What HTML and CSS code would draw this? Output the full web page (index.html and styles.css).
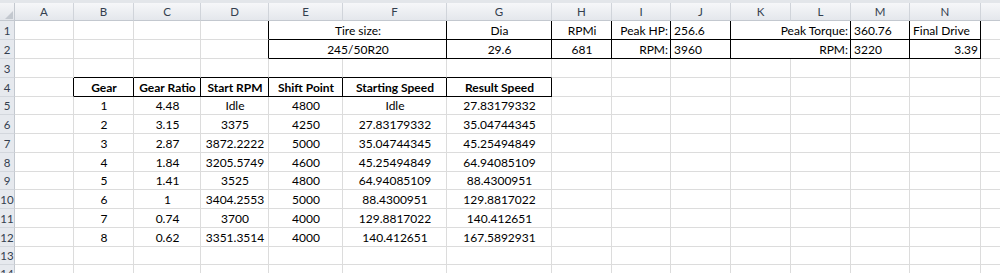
FILE: index.html
```html
<!DOCTYPE html>
<html>
<head>
<meta charset="utf-8">
<link rel="stylesheet" href="styles.css">
</head>
<body>
<div class="topstrip"></div>
<div class="sheet">
  <!-- column headers -->
  <div class="corner"><svg width="8" height="8" viewBox="0 0 8 8"><polygon points="8,0 8,8 0,8" fill="#c3c8cf"/></svg></div>
  <div class="ch">A</div><div class="ch">B</div><div class="ch">C</div><div class="ch">D</div><div class="ch">E</div><div class="ch">F</div><div class="ch">G</div><div class="ch">H</div><div class="ch">I</div><div class="ch">J</div><div class="ch">K</div><div class="ch">L</div><div class="ch">M</div><div class="ch">N</div><div class="ch"></div>

  <!-- row 1 -->
  <div class="rh">1</div>
  <div class="c"></div><div class="c"></div><div class="c"></div><div class="c kr"></div>
  <div class="c s2 kr kb">Tire size:</div>
  <div class="c kr kb">Dia</div>
  <div class="c kr kb">RPMi</div>
  <div class="c r kr kb">Peak HP:</div>
  <div class="c l kr kb">256.6</div>
  <div class="c s2 r kr kb">Peak Torque:</div>
  <div class="c l kr kb">360.76</div>
  <div class="c l kr kb">Final Drive</div>
  <div class="c"></div>

  <!-- row 2 -->
  <div class="rh">2</div>
  <div class="c"></div><div class="c"></div><div class="c"></div><div class="c kr"></div>
  <div class="c s2 kr kb">245/50R20</div>
  <div class="c kr kb">29.6</div>
  <div class="c kr kb">681</div>
  <div class="c r kr kb">RPM:</div>
  <div class="c l kr kb">3960</div>
  <div class="c s2 r kr kb">RPM:</div>
  <div class="c l kr kb">3220</div>
  <div class="c r kr kb">3.39</div>
  <div class="c"></div>

  <!-- row 3 -->
  <div class="rh">3</div>
  <div class="c"></div><div class="c kb"></div><div class="c kb"></div><div class="c kb"></div><div class="c kb"></div><div class="c kb"></div><div class="c kb"></div>
  <div class="c"></div><div class="c"></div><div class="c"></div><div class="c"></div><div class="c"></div><div class="c"></div><div class="c"></div><div class="c"></div>

  <!-- row 4 -->
  <div class="rh">4</div>
  <div class="c kr"></div>
  <div class="c b kr kb">Gear</div>
  <div class="c b kr kb">Gear Ratio</div>
  <div class="c b kr kb">Start RPM</div>
  <div class="c b kr kb">Shift Point</div>
  <div class="c b kr kb">Starting Speed</div>
  <div class="c b kr kb">Result Speed</div>
  <div class="c"></div><div class="c"></div><div class="c"></div><div class="c"></div><div class="c"></div><div class="c"></div><div class="c"></div><div class="c"></div>

  <!-- row 5 -->
  <div class="rh">5</div>
  <div class="c"></div><div class="c">1</div><div class="c">4.48</div><div class="c">Idle</div><div class="c">4800</div><div class="c">Idle</div><div class="c">27.83179332</div>
  <div class="c"></div><div class="c"></div><div class="c"></div><div class="c"></div><div class="c"></div><div class="c"></div><div class="c"></div><div class="c"></div>

  <!-- row 6 -->
  <div class="rh">6</div>
  <div class="c"></div><div class="c">2</div><div class="c">3.15</div><div class="c">3375</div><div class="c">4250</div><div class="c">27.83179332</div><div class="c">35.04744345</div>
  <div class="c"></div><div class="c"></div><div class="c"></div><div class="c"></div><div class="c"></div><div class="c"></div><div class="c"></div><div class="c"></div>

  <!-- row 7 -->
  <div class="rh">7</div>
  <div class="c"></div><div class="c">3</div><div class="c">2.87</div><div class="c">3872.2222</div><div class="c">5000</div><div class="c">35.04744345</div><div class="c">45.25494849</div>
  <div class="c"></div><div class="c"></div><div class="c"></div><div class="c"></div><div class="c"></div><div class="c"></div><div class="c"></div><div class="c"></div>

  <!-- row 8 -->
  <div class="rh">8</div>
  <div class="c"></div><div class="c">4</div><div class="c">1.84</div><div class="c">3205.5749</div><div class="c">4600</div><div class="c">45.25494849</div><div class="c">64.94085109</div>
  <div class="c"></div><div class="c"></div><div class="c"></div><div class="c"></div><div class="c"></div><div class="c"></div><div class="c"></div><div class="c"></div>

  <!-- row 9 -->
  <div class="rh">9</div>
  <div class="c"></div><div class="c">5</div><div class="c">1.41</div><div class="c">3525</div><div class="c">4800</div><div class="c">64.94085109</div><div class="c">88.4300951</div>
  <div class="c"></div><div class="c"></div><div class="c"></div><div class="c"></div><div class="c"></div><div class="c"></div><div class="c"></div><div class="c"></div>

  <!-- row 10 -->
  <div class="rh">10</div>
  <div class="c"></div><div class="c">6</div><div class="c">1</div><div class="c">3404.2553</div><div class="c">5000</div><div class="c">88.4300951</div><div class="c">129.8817022</div>
  <div class="c"></div><div class="c"></div><div class="c"></div><div class="c"></div><div class="c"></div><div class="c"></div><div class="c"></div><div class="c"></div>

  <!-- row 11 -->
  <div class="rh">11</div>
  <div class="c"></div><div class="c">7</div><div class="c">0.74</div><div class="c">3700</div><div class="c">4000</div><div class="c">129.8817022</div><div class="c">140.412651</div>
  <div class="c"></div><div class="c"></div><div class="c"></div><div class="c"></div><div class="c"></div><div class="c"></div><div class="c"></div><div class="c"></div>

  <!-- row 12 -->
  <div class="rh">12</div>
  <div class="c"></div><div class="c">8</div><div class="c">0.62</div><div class="c">3351.3514</div><div class="c">4000</div><div class="c">140.412651</div><div class="c">167.5892931</div>
  <div class="c"></div><div class="c"></div><div class="c"></div><div class="c"></div><div class="c"></div><div class="c"></div><div class="c"></div><div class="c"></div>

  <!-- row 13 -->
  <div class="rh">13</div>
  <div class="c"></div><div class="c"></div><div class="c"></div><div class="c"></div><div class="c"></div><div class="c"></div><div class="c"></div>
  <div class="c"></div><div class="c"></div><div class="c"></div><div class="c"></div><div class="c"></div><div class="c"></div><div class="c"></div><div class="c"></div>

  <!-- row 14 -->
  <div class="rh rh-last">14</div>
  <div class="c"></div><div class="c"></div><div class="c"></div><div class="c"></div><div class="c"></div><div class="c"></div><div class="c"></div>
  <div class="c"></div><div class="c"></div><div class="c"></div><div class="c"></div><div class="c"></div><div class="c"></div><div class="c"></div><div class="c"></div>
</div>
</body>
</html>
```

FILE: styles.css
```css
html, body {
  margin: 0;
  padding: 0;
  background: #ffffff;
  overflow: hidden;
  width: 1000px;
  height: 273px;
}

.topstrip {
  height: 3px;
  background: #e3e6ea;
}

.sheet {
  display: grid;
  grid-template-columns: 15px 59px 60px 67px 68px 74px 104px 105px 60px 59px 60px 60px 60px 59px 71px 40px;
  grid-template-rows: 18px 19px 19px 19px 19px 18px 19px 19px 19px 18px 19px 19px 19px 18px 19px;
  font-family: Lato, "Liberation Sans", sans-serif;
  font-size: 12px;
  color: #000;
  width: 1021px;
}

.corner {
  background: linear-gradient(#f4f5f7, #e2e5ea);
  border-right: 1px solid #c3c8cf;
  border-bottom: 1px solid #c3c8cf;
  display: flex;
  align-items: flex-end;
  justify-content: flex-end;
  padding: 0 1px 1px 0;
  box-sizing: border-box;
}

.ch {
  background: linear-gradient(#f6f7f9, #e4e7ec);
  border-right: 1px solid #d0d4da;
  border-bottom: 1px solid #c3c8cf;
  box-sizing: border-box;
  display: flex;
  align-items: center;
  justify-content: center;
  font-size: 11.5px;
  color: #333e4e;
  line-height: 12px;
  padding-top: 1px;
}

.rh {
  background: #e6e9ee;
  border-right: 1px solid #c3c8cf;
  border-bottom: 1px solid #d3d7dd;
  box-sizing: border-box;
  display: flex;
  align-items: center;
  justify-content: center;
  font-size: 11.5px;
  color: #333e4e;
  line-height: 12px;
  padding-top: 1px;
  overflow: hidden;
}

.rh-last {
  align-items: flex-start;
  padding-top: 3px;
}

.c {
  border-right: 1px solid #dcdcdc;
  border-bottom: 1px solid #dcdcdc;
  box-sizing: border-box;
  display: flex;
  align-items: flex-end;
  justify-content: center;
  padding: 0 2px 2px 3px;
  line-height: 13px;
  white-space: nowrap;
}

.l { justify-content: flex-start; }
.r { justify-content: flex-end; }
.b { font-weight: bold; }
.s2 { grid-column: span 2; }
.kr { border-right-color: #000; }
.kb { border-bottom-color: #000; }
```
